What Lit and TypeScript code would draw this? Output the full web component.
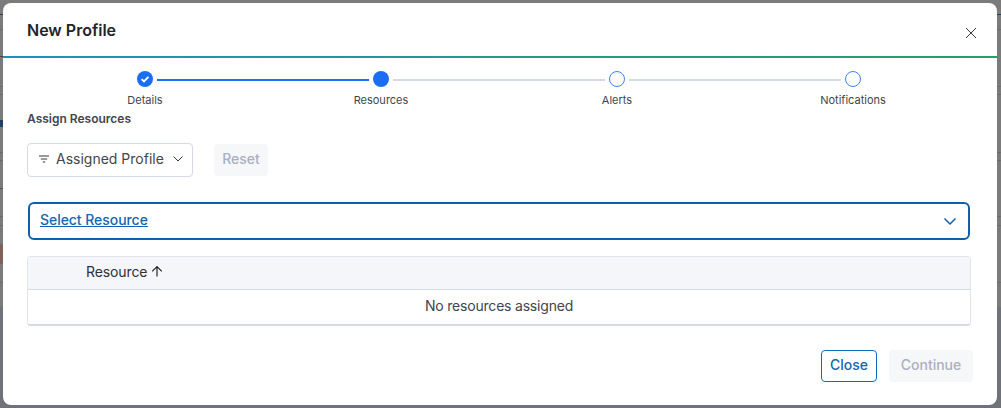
import { LitElement, html, css } from "lit";
import { customElement } from "lit/decorators.js";

const steps = [
  { label: "Details", state: "done" },
  { label: "Resources", state: "current" },
  { label: "Alerts", state: "todo" },
  { label: "Notifications", state: "todo" },
];

@customElement("app-root")
export class AppRoot extends LitElement {
  static styles = css`
    :host {
      display: block;
      width: 1001px;
      height: 408px;
      font-family: Inter, "Liberation Sans", sans-serif;
      overflow: hidden;
    }
    * { box-sizing: border-box; }
    .backdrop {
      width: 1001px;
      height: 408px;
      padding: 3px 4px 3px 3px;
      background:
        linear-gradient(#1f3f63, #1f3f63) 0 14px / 100% 1px no-repeat,
        linear-gradient(#6c6c6c, #6c6c6c) 0 29px / 100% 1px no-repeat,
        linear-gradient(#4c4238, #4c4238) 0 56px / 3px 1px no-repeat,
        linear-gradient(#6c6c6c, #6c6c6c) 0 86px / 100% 1px no-repeat,
        linear-gradient(#6c6c6c, #6c6c6c) 0 94px / 100% 1px no-repeat,
        linear-gradient(#1f3f63, #1f3f63) 0 120px / 3px 7px no-repeat,
        linear-gradient(#6c6c6c, #6c6c6c) 0 152px / 100% 1px no-repeat,
        linear-gradient(#6c6c6c, #6c6c6c) 0 160px / 100% 1px no-repeat,
        linear-gradient(#6f4a48, #6f4a48) 0 188px / 3px 1px no-repeat,
        linear-gradient(#6c6c6c, #6c6c6c) 0 216px / 100% 1px no-repeat,
        linear-gradient(#6c6c6c, #6c6c6c) 0 225px / 100% 1px no-repeat,
        linear-gradient(#80605a, #80605a) 0 244px / 3px 20px no-repeat,
        linear-gradient(#6c6c6c, #6c6c6c) 0 282px / 100% 1px no-repeat,
        linear-gradient(#6f7278, #6f7278) 0 307px / 100% 101px no-repeat,
        #7b7b7b;
    }
    .dialog {
      height: 402px;
      background: #fff;
      border-radius: 8px;
      display: flex;
      flex-direction: column;
      overflow: hidden;
    }
    .header {
      height: 53px;
      flex: none;
      display: flex;
      justify-content: space-between;
      padding: 17px 20px 0 24px;
    }
    h2 {
      margin: 0;
      font-size: 16px;
      line-height: 20px;
      font-weight: 600;
      color: #21252b;
    }
    .x { margin-top: 7px; display: block; }
    .rule {
      height: 2px;
      flex: none;
      background: linear-gradient(90deg, #1f8fbf 0%, #259a85 50%, #259e68 100%);
    }
    .body {
      flex: 1;
      display: flex;
      flex-direction: column;
      padding: 13px 24px 0;
    }
    .stepper {
      display: grid;
      grid-template-columns: repeat(3, 236px) 1fr;
      margin-left: 62px;
      width: 840px;
      height: 40px;
    }
    .step {
      width: 112px;
      display: flex;
      flex-direction: column;
      align-items: center;
      position: relative;
    }
    .dot {
      width: 16px;
      height: 16px;
      border-radius: 50%;
      display: flex;
      align-items: center;
      justify-content: center;
      background: #1b6ef3;
      flex: none;
    }
    .dot.todo {
      background: #fff;
      border: 1px solid #3f84f0;
    }
    .line {
      position: absolute;
      top: 8px;
      left: 68px;
      width: 212px;
      height: 2px;
      background: #d5d9e3;
    }
    .line.on { background: #1b6ef3; }
    .step-label {
      margin-top: 6px;
      font-size: 11px;
      line-height: 14px;
      color: #41454d;
      white-space: nowrap;
    }
    .section {
      font-size: 12px;
      line-height: 14px;
      font-weight: 600;
      color: #41454d;
      margin: 1px 0 0;
    }
    .filters {
      display: flex;
      align-items: center;
      gap: 21px;
      margin-top: 17px;
    }
    .lift { margin-bottom: 4px; }
    .lift-sm { margin-bottom: 2px; }
    .profile {
      width: 166px;
      height: 34px;
      border: 1px solid #d5d9e3;
      border-radius: 4px;
      display: flex;
      align-items: center;
      padding-left: 10px;
      gap: 6px;
      font-size: 14px;
      color: #41454d;
    }
    .chev { margin-left: 2px; }
    .reset {
      width: 54px;
      height: 32px;
      padding-bottom: 4px;
      border-radius: 4px;
      background: #f6f7f9;
      color: #a9b0c0;
      font-size: 14px;
      font-weight: 500;
      display: flex;
      align-items: center;
      justify-content: center;
    }
    .select {
      height: 38px;
      margin: 25px 3px 0 1px;
      border: 2px solid #0f5fa8;
      border-radius: 6px;
      display: flex;
      align-items: center;
      justify-content: space-between;
      padding: 0 11px 0 10px;
    }
    .select a {
      color: #1565ae;
      font-size: 14px;
      letter-spacing: -0.05px;
      font-weight: 500;
      text-decoration: underline;
    }
    .table {
      margin: 16px 2px 0 0;
      height: 70px;
      border: 1px solid #e2e5ec;
      border-bottom: 2px solid #d5d9e3;
      border-radius: 4px;
      overflow: hidden;
    }
    .thead {
      height: 33px;
      background: #f5f6fa;
      border-bottom: 1px solid #d5d9e3;
      display: flex;
      align-items: center;
      padding-left: 58px;
      gap: 4px;
      font-size: 14px;
      letter-spacing: -0.1px;
      color: #2c3036;
    }
    .empty {
      height: 34px;
      padding-bottom: 3px;
      display: flex;
      align-items: center;
      justify-content: center;
      font-size: 14px;
      letter-spacing: -0.2px;
      color: #41454d;
    }
    .footer {
      display: flex;
      justify-content: flex-end;
      gap: 12px;
      margin-top: 24px;
    }
    .close {
      width: 56px;
      height: 32px;
      padding-bottom: 4px;
      border: 1px solid #0f6cbd;
      border-radius: 4px;
      color: #1565ae;
      font-size: 14px;
      font-weight: 500;
      display: flex;
      align-items: center;
      justify-content: center;
    }
    .continue {
      width: 84px;
      height: 32px;
      padding-bottom: 4px;
      border-radius: 4px;
      background: #f6f7f9;
      color: #a9b0c0;
      font-size: 14px;
      font-weight: 500;
      display: flex;
      align-items: center;
      justify-content: center;
    }
  `;

  render() {
    return html`
      <div class="backdrop">
        <div class="dialog">
          <div class="header">
            <h2>New Profile</h2>
            <svg class="x" width="12" height="12" viewBox="0 0 12 12" fill="none" stroke="#33373e" stroke-width="1">
              <path d="M1 1l10 10M11 1L1 11" />
            </svg>
          </div>
          <div class="rule"></div>
          <div class="body">
            <div class="stepper">
              ${steps.map(
                (s, i) => html`
                  <div class="step">
                    <div class="dot ${s.state}">
                      ${s.state === "done"
                        ? html`<svg width="10" height="10" viewBox="0 0 10 10" fill="none" stroke="#fff" stroke-width="1.8"><path d="M1.6 5.2l2.4 2.2L8.4 2.9" /></svg>`
                        : ""}
                    </div>
                    ${i < 3 ? html`<div class="line ${i === 0 ? "on" : ""}"></div>` : ""}
                    <div class="step-label">${s.label}</div>
                  </div>
                `,
              )}
            </div>
            <div class="section">Assign Resources</div>
            <div class="filters">
              <div class="profile">
                <svg class="lift-sm" width="12" height="10" viewBox="0 0 12 10" fill="none" stroke="#33373e" stroke-width="1">
                  <path d="M1 2h10M2.8 5h6.4M4.8 8h2.4" />
                </svg>
                <span class="lift">Assigned Profile</span>
                <svg class="chev lift-sm" width="12" height="8" viewBox="0 0 12 8" fill="none" stroke="#33373e" stroke-width="1">
                  <path d="M1.5 1.5L6 6l4.5-4.5" />
                </svg>
              </div>
              <div class="reset">Reset</div>
            </div>
            <div class="select">
              <a class="lift">Select Resource</a>
              <svg width="14" height="9" viewBox="0 0 14 9" fill="none" stroke="#0f5fa8" stroke-width="1.5">
                <path d="M1.5 1.5L7 7l5.5-5.5" />
              </svg>
            </div>
            <div class="table">
              <div class="thead">
                <span class="lift">Resource</span>
                <svg class="lift" width="12" height="12" viewBox="0 0 12 12" fill="none" stroke="#21252b" stroke-width="1.2">
                  <path d="M6 11.5V1.5M1.2 6.3L6 1.5l4.8 4.8" />
                </svg>
              </div>
              <div class="empty">No resources assigned</div>
            </div>
            <div class="footer">
              <div class="close">Close</div>
              <div class="continue">Continue</div>
            </div>
          </div>
        </div>
      </div>
    `;
  }
}
